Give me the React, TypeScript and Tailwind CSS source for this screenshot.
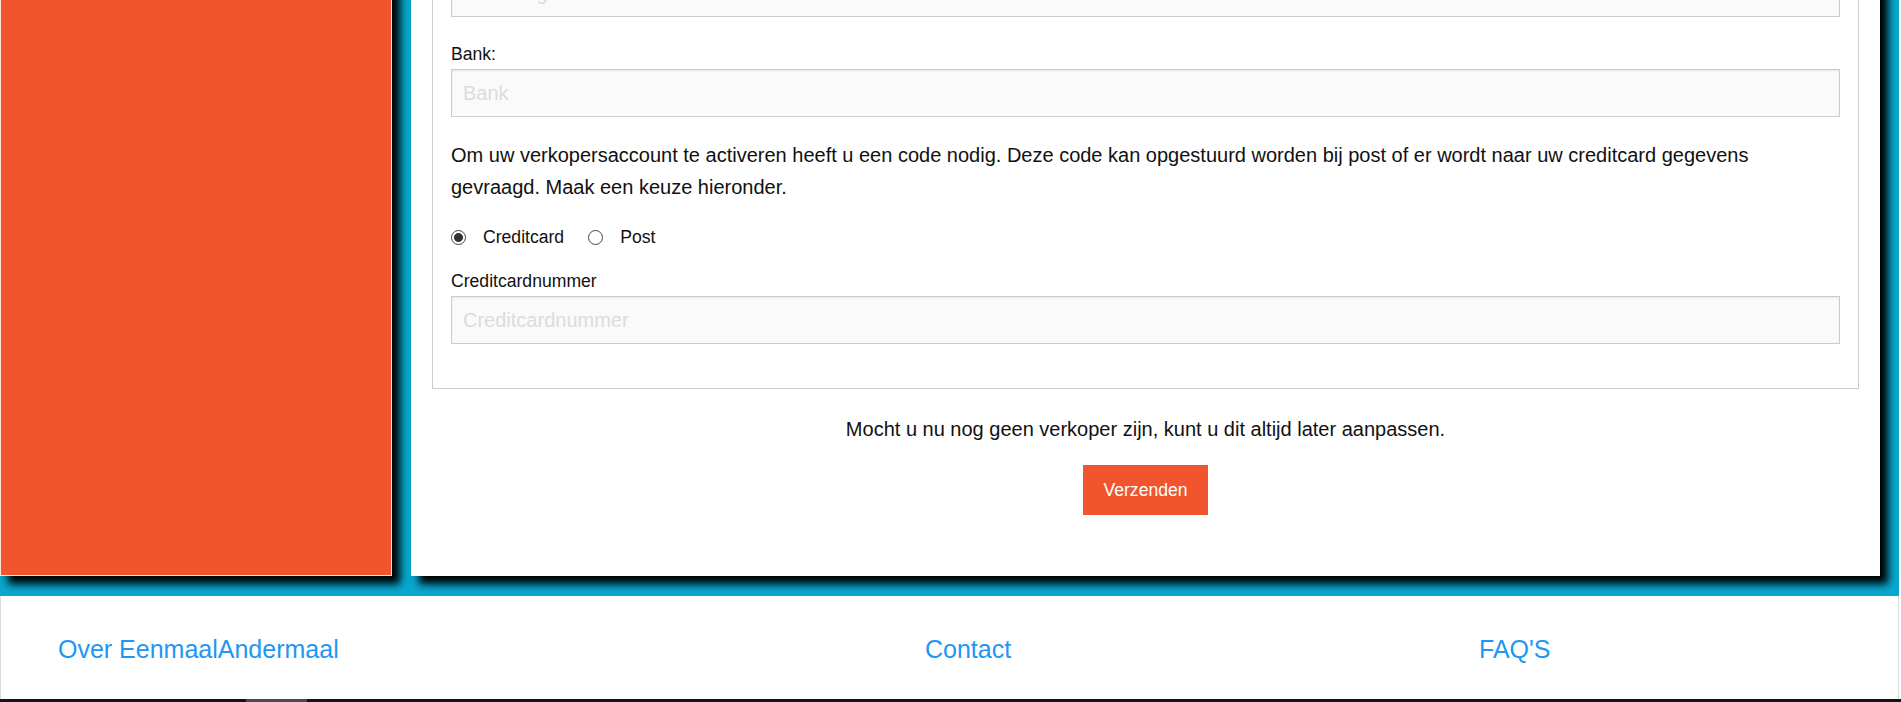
const inputClass =
  'block w-full h-[48px] px-[11px] bg-[#fafafa] border border-[#cccccc] shadow-[inset_0_1px_2px_rgba(0,0,0,0.08)] text-[20px] text-[#333] placeholder:text-[#dcdcdc] outline-none';

const radioClass =
  'appearance-none m-0 w-[15px] h-[15px] rounded-full border border-[#444] bg-white checked:bg-[radial-gradient(circle,#333_0,#333_4px,#fff_5px)]';

function Field({ label, placeholder }: { label: string; placeholder: string }) {
  return (
    <div>
      <label className="block mb-[5px] leading-[20px]">{label}</label>
      <input className={inputClass} placeholder={placeholder} />
    </div>
  );
}

export default function App() {
  return (
    <div className="h-[702px] overflow-hidden bg-white font-['Liberation_Sans',Arial,sans-serif] text-[17.6px] text-[#111]">
      {/* page is scrolled down: top of the form is out of view */}
      <div className="-mt-[95px] w-[1899px] flex gap-[19px] pr-[19px] pb-[20px] bg-[#09a7ce]">
        <aside className="w-[392px] shrink-0 bg-[#f1552d] border border-[#fbe2d9] shadow-[8px_8px_8px_#000]" />

        <main className="w-[1469px] bg-white px-[21px] pt-[20px] pb-[61px] shadow-[8px_8px_8px_#000]">
          <div className="border border-[#cccccc] px-[18px] pt-[18px] pb-[44px]">
            <div className="mb-[27px]">
              <Field label="Rekeningnummer:" placeholder="Rekeningnummer" />
            </div>
            <Field label="Bank:" placeholder="Bank" />

            <p className="mt-[22px] text-[20px] leading-[32px]">
              Om uw verkopersaccount te activeren heeft u een code nodig. Deze code kan opgestuurd worden bij
              post of er wordt naar uw creditcard gegevens gevraagd. Maak een keuze hieronder.
            </p>

            <div className="mt-[24px] flex items-center gap-[24px] leading-[20px]">
              <label className="flex items-center gap-[17px]">
                <input type="radio" name="code" defaultChecked className={radioClass} />
                Creditcard
              </label>
              <label className="flex items-center gap-[17px]">
                <input type="radio" name="code" className={radioClass} />
                Post
              </label>
            </div>

            <div className="mt-[24px]">
              <Field label="Creditcardnummer" placeholder="Creditcardnummer" />
            </div>
          </div>

          <p className="mt-[28px] text-center text-[20px] leading-[24px]">
            Mocht u nu nog geen verkoper zijn, kunt u dit altijd later aanpassen.
          </p>

          <button className="block mx-auto mt-[24px] px-[20px] py-[15px] leading-[20px] bg-[#f1552d] text-white">
            Verzenden
          </button>
        </main>
      </div>

      <footer className="w-[1899px] h-[103px] grid grid-cols-[867px_554px_1fr] items-center pl-[57px] pt-[4px] bg-white border-x border-[#dddddd] text-[25px] text-[#2196f3]">
        <a href="#">Over EenmaalAndermaal</a>
        <a href="#">Contact</a>
        <a href="#">FAQ'S</a>
      </footer>

      <div className="h-[40px] bg-[#141414] pl-[246px]">
        <div className="w-[61px] h-[3px] bg-[#4a4a4a]" />
      </div>
    </div>
  );
}
